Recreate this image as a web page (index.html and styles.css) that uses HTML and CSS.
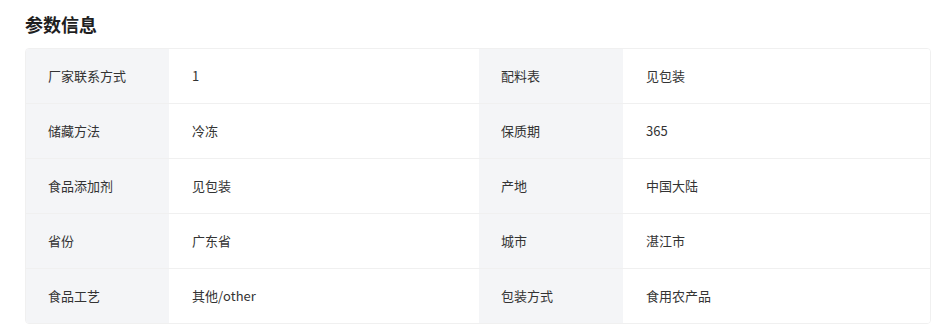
FILE: index.html
```html
<!DOCTYPE html>
<html lang="zh-CN">
<head>
<meta charset="utf-8">
<title>参数信息</title>
<link rel="stylesheet" href="styles.css">
</head>
<body>
<div class="page">
  <h2 class="title">参数信息</h2>
  <div class="params">
    <div class="cell label">厂家联系方式</div><div class="cell value">1</div>
    <div class="cell label">配料表</div><div class="cell value last">见包装</div>
    <div class="cell label">储藏方法</div><div class="cell value">冷冻</div>
    <div class="cell label">保质期</div><div class="cell value last">365</div>
    <div class="cell label">食品添加剂</div><div class="cell value">见包装</div>
    <div class="cell label">产地</div><div class="cell value last">中国大陆</div>
    <div class="cell label">省份</div><div class="cell value">广东省</div>
    <div class="cell label">城市</div><div class="cell value last">湛江市</div>
    <div class="cell label bottom">食品工艺</div><div class="cell value bottom">其他/other</div>
    <div class="cell label bottom">包装方式</div><div class="cell value last bottom">食用农产品</div>
  </div>
</div>
</body>
</html>
```
FILE: styles.css
```css
html, body {
  margin: 0;
  padding: 0;
  background: #ffffff;
}
.page {
  padding: 11px 9px 0 25px;
  font-family: "Noto Sans CJK SC", "Noto Sans", sans-serif;
  color: #333333;
}
.title {
  margin: 0 0 11px 0;
  font-size: 18px;
  line-height: 26px;
  font-weight: 700;
  color: #1f1f1f;
}
.params {
  width: 904px;
  display: grid;
  grid-template-columns: 143px 310px 144px 307px;
  border: 1px solid #f0f0f0;
  border-radius: 4px;
  overflow: hidden;
}
.cell {
  height: 55px;
  box-sizing: border-box;
  padding-bottom: 2px;
  display: flex;
  align-items: center;
  font-size: 13px;
  border-bottom: 1px solid #f0f0f0;
  color: #333333;
}
.cell.bottom {
  height: 54px;
  border-bottom: none;
}
.label {
  background: #f4f5f7;
  padding-left: 22px;
}
.value {
  background: #ffffff;
  padding-left: 23px;
}
```
